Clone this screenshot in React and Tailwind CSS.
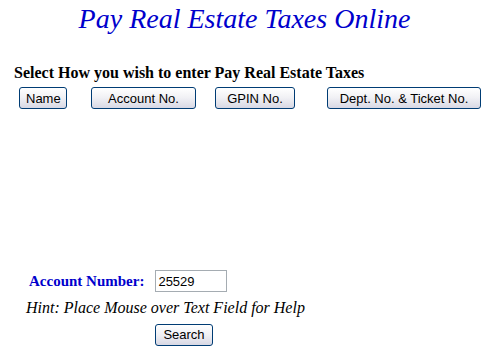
export default function App() {
  const serif = { fontFamily: '"Liberation Serif", "Times New Roman", serif' };
  const btn =
    "h-[22px] px-[6px] rounded-[3px] border border-[#003c74] bg-gradient-to-b from-[#ffffff] via-[#f0f0f4] to-[#d8d8e4] text-[13px] text-black leading-none font-['Liberation_Sans',Arial,sans-serif]";
  return (
    <div className="w-[489px] h-[354px] bg-white overflow-hidden">
      <div className="pt-[4px] text-center">
        <h1 className="text-[28px] leading-[30px] italic font-normal text-[#0000cc] font-['Liberation_Serif','Times_New_Roman',serif]">
          Pay Real Estate Taxes Online
        </h1>
      </div>
      <div className="mt-[30px] pl-[14px]">
        <div className="text-[16px] leading-[18px] font-bold text-black" style={serif}>
          Select How you wish to enter Pay Real Estate Taxes
        </div>
      </div>
      <div className="mt-[5px] flex items-center pl-[19px]">
        <button className={`${btn} w-[48px] px-0`}>Name</button>
        <button className={`${btn} w-[105px] ml-[24px]`}>Account No.</button>
        <button className={`${btn} w-[80px] ml-[19px]`}>GPIN No.</button>
        <button className={`${btn} w-[154px] ml-[32px]`}>Dept. No. &amp; Ticket No.</button>
      </div>
      <div className="mt-[161px] flex items-center pl-[29px]">
        <span className="text-[15px] font-bold text-[#0000cc] leading-none" style={serif}>
          Account Number:
        </span>
        <input
          readOnly
          value="25529"
          className="ml-[11px] w-[72px] h-[22px] border border-[#a5acb2] px-[2px] text-[13px] text-black outline-none font-['Liberation_Sans',Arial,sans-serif]"
        />
      </div>
      <div className="mt-[8px] pl-[26px] text-[16px] italic text-black leading-[16px]" style={serif}>
        Hint: Place Mouse over Text Field for Help
      </div>
      <div className="mt-[5px] pl-[155px]">
        <button className={`${btn} w-[58px] px-0`}>Search</button>
      </div>
    </div>
  );
}
